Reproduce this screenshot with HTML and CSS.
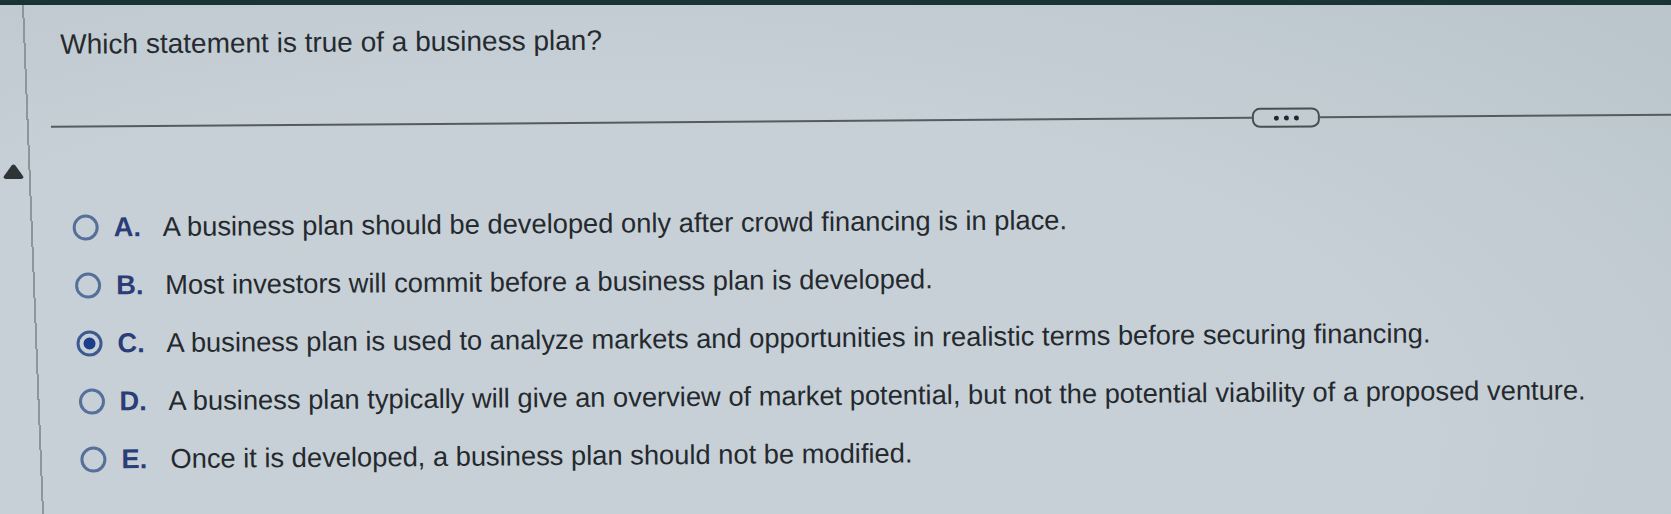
FILE: index.html
```html
<!DOCTYPE html>
<html>
<head>
<meta charset="utf-8">
<link rel="stylesheet" href="styles.css">
</head>
<body>
<div class="topbar"></div>
<div class="page">
  <div class="side">
    <svg class="tri" width="21" height="15" viewBox="0 0 21 15"><path d="M8.6 1.6 Q10.5 -0.6 12.4 1.6 L20 12 Q21.2 14.6 18.4 15 L2.6 15 Q-0.2 14.6 1 12 Z" fill="#2f3436"/></svg>
  </div>
  <div class="main">
    <h1 class="question">Which statement is true of a business plan?</h1>
    <div class="divider">
      <div class="rule rule-left"></div>
      <div class="more"><span></span><span></span><span></span></div>
      <div class="rule rule-right"></div>
    </div>
    <ul class="options">
      <li class="opt opt-a"><span class="radio"></span><span class="letter">A.</span><span class="text">A business plan should be developed only after crowd financing is in place.</span></li>
      <li class="opt opt-b"><span class="radio"></span><span class="letter">B.</span><span class="text">Most investors will commit before a business plan is developed.</span></li>
      <li class="opt opt-c"><span class="radio checked"></span><span class="letter">C.</span><span class="text">A business plan is used to analyze markets and opportunities in realistic terms before securing financing.</span></li>
      <li class="opt opt-d"><span class="radio"></span><span class="letter">D.</span><span class="text">A business plan typically will give an overview of market potential, but not the potential viability of a proposed venture.</span></li>
      <li class="opt opt-e"><span class="radio"></span><span class="letter">E.</span><span class="text">Once it is developed, a business plan should not be modified.</span></li>
    </ul>
  </div>
</div>
</body>
</html>
```

FILE: styles.css
```css
html, body {
  margin: 0;
  padding: 0;
  height: 100%;
}
body {
  background: radial-gradient(ellipse 110% 150% at 35% 85%, #c6d0d6 45%, #b4bfc6 100%);
  font-family: "Liberation Sans", Arial, sans-serif;
  color: #25292e;
  overflow: hidden;
}
.topbar {
  height: 5px;
  background: #1a3336;
}
.page {
  display: flex;
  height: 509px;
  background: linear-gradient(87.75deg, transparent calc(50% - 1px), #8c969c calc(50% - 1px), #8c969c calc(50% + 1px), transparent calc(50% + 1px)) no-repeat 0 0 / 66px 100%;
}
.side {
  width: 29px;
  flex: none;
  display: flex;
  flex-direction: column;
  padding-top: 159px;
}
.tri {
  display: block;
  margin-left: 3px;
}
.main {
  flex: 1;
  padding-left: 31px;
  transform: rotate(-0.43deg);
  transform-origin: 0 0;
}
.question {
  margin: 24px 0 0 0;
  font-size: 28px;
  font-weight: normal;
  line-height: 32px;
  color: #262a2f;
}
.divider {
  display: flex;
  align-items: center;
  height: 20px;
  margin-top: 56px;
  margin-left: -10px;
  margin-right: -20px;
}
.rule {
  height: 2px;
  background: #545c61;
}
.rule-left {
  width: 1201px;
  flex: none;
}
.rule-right {
  flex: 1;
}
.more {
  width: 68px;
  height: 20px;
  box-sizing: border-box;
  border: 2px solid #474f54;
  border-radius: 8px;
  display: flex;
  justify-content: center;
  align-items: center;
  gap: 5px;
  flex: none;
}
.more span {
  width: 5px;
  height: 5px;
  border-radius: 50%;
  background: #1f2a35;
}
.options {
  list-style: none;
  margin: 61.5px 0 0 0;
  padding: 0;
}
.opt {
  display: flex;
  align-items: center;
  height: 58px;
}
.radio {
  width: 26px;
  height: 26px;
  border: 3px solid #56709a;
  border-radius: 50%;
  flex: none;
  box-sizing: border-box;
  display: flex;
  align-items: center;
  justify-content: center;
}
.opt-a .radio { margin-left: 11px; }
.opt-b .radio { margin-left: 13px; }
.opt-c .radio { margin-left: 14px; }
.opt-d .radio { margin-left: 15.5px; }
.opt-e .radio { margin-left: 17px; }
.radio.checked {
  border-color: #3c5990;
}
.radio.checked::after {
  content: "";
  width: 12px;
  height: 12px;
  border-radius: 50%;
  background: #1d3e8a;
}
.letter {
  color: #2a3d76;
  font-size: 27.3px;
  font-weight: bold;
  width: 49px;
  margin-left: 15px;
  flex: none;
}
.text {
  font-size: 27.3px;
  color: #25292e;
  white-space: nowrap;
}
```
